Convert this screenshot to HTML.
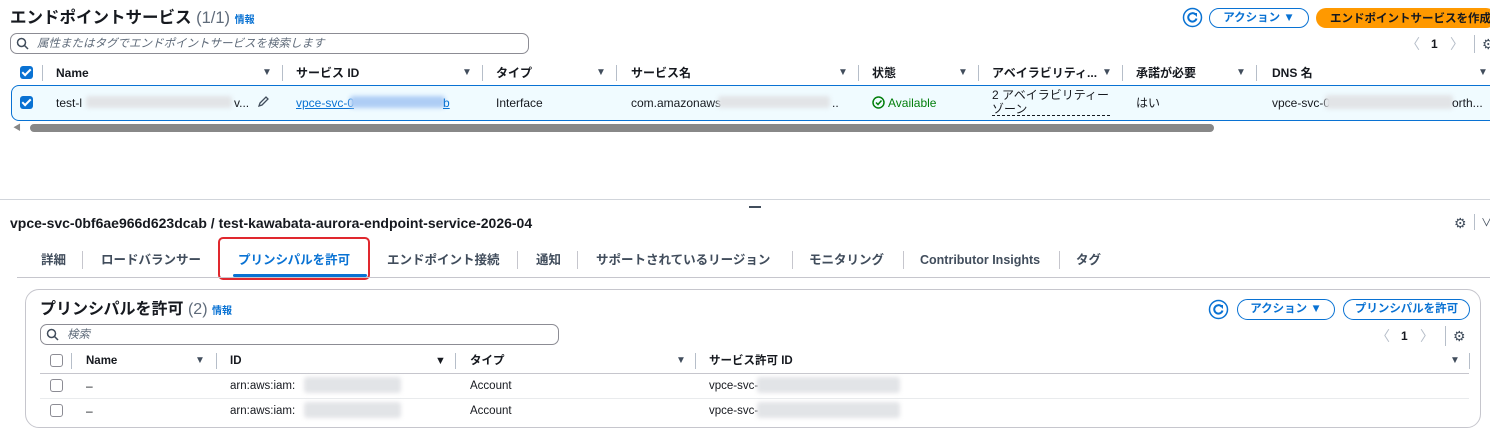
<!DOCTYPE html>
<html><head><meta charset="utf-8"><style>
*{margin:0;padding:0;box-sizing:border-box}
body{width:1490px;height:439px;background:#fff;font-family:"Liberation Sans","Noto Sans CJK JP",sans-serif;color:#16191f;position:relative;overflow:hidden;font-size:12px;line-height:18px}
.a{position:absolute;white-space:nowrap;line-height:18px}
.b{font-weight:bold}
.hd{font-weight:bold;font-size:12px;color:#16191f}
.tri{position:absolute;font-size:10px;color:#414d5c;line-height:18px}
.dv{position:absolute;width:1px;background:#b6bec9;height:16px}
.blur{position:absolute;background:#e2e4e7;filter:blur(2px);border-radius:3px}
.btn{position:absolute;border:1.5px solid #0972d3;border-radius:12px;color:#0972d3;font-weight:bold;font-size:11.5px;text-align:center;padding-top:1px}
.cb{position:absolute;width:13px;height:13px;border-radius:3px}
.cbon{background:#0972d3}
.cbon:after{content:"";position:absolute;left:4px;top:1px;width:3px;height:7px;border:solid #fff;border-width:0 2px 2px 0;transform:rotate(45deg)}
.cboff{border:1.5px solid #8c8c94;background:#fff}
.search{position:absolute;border:1.5px solid #8c8c94;border-radius:7px;color:#5f6b7a;font-style:italic;font-size:11.5px;padding-left:26px;padding-top:1px;line-height:18px}
.tab{position:absolute;top:251px;font-weight:bold;font-size:12.5px;color:#414d5c;line-height:18px;white-space:nowrap}
.tdv{position:absolute;top:251px;width:1px;height:18px;background:#c6c6cd}
</style></head><body>

<div class="a b" style="left:10px;top:9px;font-size:16.5px">エンドポイントサービス <span style="font-weight:normal;color:#5f6b7a">(1/1)</span> <span style="font-size:10px;color:#0972d3">情報</span></div>
<div class="search" style="left:10px;top:33px;width:519px;height:21px">属性またはタグでエンドポイントサービスを検索します</div>
<svg class="a" style="left:16px;top:37px" width="13" height="13"><circle cx="5.5" cy="5.5" r="4" fill="none" stroke="#414d5c" stroke-width="1.5"/><line x1="8.5" y1="8.5" x2="12" y2="12" stroke="#414d5c" stroke-width="1.5"/></svg>

<svg class="a" style="left:1182px;top:7px" width="21" height="21"><circle cx="10.5" cy="10.5" r="9" fill="none" stroke="#0972d3" stroke-width="1.5"/><path d="M13.5 7.5a4.2 4.2 0 1 0 1 4" fill="none" stroke="#0972d3" stroke-width="2"/><path d="M11 6h4v4z" fill="#0972d3"/></svg>
<div class="btn" style="left:1209px;top:8px;width:100px;height:20px;line-height:16px">アクション ▼</div>
<div class="a b" style="left:1316px;top:8px;width:180px;height:20px;line-height:20px;background:#ff9900;border-radius:10px;font-size:11.5px;padding-left:14px;padding-top:1px">エンドポイントサービスを作成</div>
<div class="a" style="left:1406px;top:35px;color:#b6bec9;font-size:14px">〈</div>
<div class="a b" style="left:1431px;top:35px">1</div>
<div class="a" style="left:1450px;top:35px;color:#b6bec9;font-size:14px">〉</div>
<div class="dv" style="left:1474px;top:35px;height:18px"></div>
<div class="a" style="left:1482px;top:35px;font-size:14px;color:#414d5c">⚙</div>

<div class="cb cbon" style="left:20px;top:66px"></div>
<div class="dv" style="left:42px;top:65px"></div>
<div class="a hd" style="left:56px;top:64px">Name</div><div class="tri" style="left:262px;top:64px">▼</div><div class="dv" style="left:282px;top:65px"></div>
<div class="a hd" style="left:296px;top:64px">サービス ID</div><div class="tri" style="left:462px;top:64px">▼</div><div class="dv" style="left:482px;top:65px"></div>
<div class="a hd" style="left:496px;top:64px">タイプ</div><div class="tri" style="left:596px;top:64px">▼</div><div class="dv" style="left:616px;top:65px"></div>
<div class="a hd" style="left:631px;top:64px">サービス名</div><div class="tri" style="left:838px;top:64px">▼</div><div class="dv" style="left:858px;top:65px"></div>
<div class="a hd" style="left:872px;top:64px">状態</div><div class="tri" style="left:958px;top:64px">▼</div><div class="dv" style="left:978px;top:65px"></div>
<div class="a hd" style="left:992px;top:64px">アベイラビリティ...</div><div class="tri" style="left:1102px;top:64px">▼</div><div class="dv" style="left:1122px;top:65px"></div>
<div class="a hd" style="left:1136px;top:64px">承諾が必要</div><div class="tri" style="left:1236px;top:64px">▼</div><div class="dv" style="left:1256px;top:65px"></div>
<div class="a hd" style="left:1272px;top:64px">DNS 名</div><div class="tri" style="left:1478px;top:64px">▼</div>

<div class="a" style="left:11px;top:85px;width:1490px;height:36px;border:1.5px solid #0972d3;border-radius:8px;background:#f0fbff"></div>
<div class="cb cbon" style="left:20px;top:96px"></div>
<div class="a" style="left:56px;top:94px">test-l</div><div class="blur" style="left:86px;top:96px;width:146px;height:12px"></div><div class="a" style="left:234px;top:94px">v...</div>
<svg class="a" style="left:257px;top:95px" width="12" height="13"><path d="M2 11l1-3 6-6 2 2-6 6z" fill="none" stroke="#414d5c" stroke-width="1.3"/></svg>
<div class="a" style="left:296px;top:94px;color:#0972d3;text-decoration:underline">vpce-svc-0</div><div class="blur" style="left:350px;top:96px;width:95px;height:12px;background:#aecdf5"></div><div class="a" style="left:443px;top:94px;color:#0972d3;text-decoration:underline">b</div>
<div class="a" style="left:496px;top:94px">Interface</div>
<div class="a" style="left:631px;top:94px">com.amazonaws</div><div class="blur" style="left:718px;top:96px;width:112px;height:12px"></div><div class="a" style="left:832px;top:94px">..</div>
<svg class="a" style="left:872px;top:96px" width="13" height="13"><circle cx="6.5" cy="6.5" r="5.5" fill="none" stroke="#037f0c" stroke-width="1.5"/><path d="M4 6.5l2 2 3.5-4" fill="none" stroke="#037f0c" stroke-width="1.5"/></svg>
<div class="a" style="left:888px;top:94px;color:#037f0c">Available</div>
<div class="a" style="left:992px;top:88px;line-height:14px">2 アベイラビリティー<br>ゾーン</div>
<div class="a" style="left:992px;top:115px;width:118px;border-top:1px dashed #16191f"></div>
<div class="a" style="left:1136px;top:94px">はい</div>
<div class="a" style="left:1272px;top:94px">vpce-svc-0</div><div class="blur" style="left:1325px;top:95px;width:128px;height:14px"></div><div class="a" style="left:1452px;top:94px">orth...</div>

<div class="a" style="left:13px;top:119px;font-size:8px;color:#888">◀</div>
<div class="a" style="left:30px;top:124px;width:1184px;height:8px;background:#888;border-radius:4px"></div>

<div class="a" style="left:0;top:199px;width:1490px;height:1px;background:#d1d5db"></div>
<div class="a" style="left:749px;top:206px;width:12px;height:2px;background:#414d5c"></div>

<div class="a b" style="left:10px;top:214px;font-size:14px">vpce-svc-0bf6ae966d623dcab / test-kawabata-aurora-endpoint-service-2026-04</div>
<div class="a" style="left:1454px;top:214px;font-size:14px;color:#414d5c">⚙</div>
<div class="dv" style="left:1474px;top:214px"></div>
<div class="a" style="left:1481px;top:214px;color:#414d5c;font-size:11px">∨</div>

<div class="tab" style="left:41px">詳細</div><div class="tdv" style="left:82px"></div>
<div class="tab" style="left:101px">ロードバランサー</div>
<div class="tab" style="left:238px;color:#0972d3">プリンシパルを許可</div>
<div class="a" style="left:233px;top:274px;width:134px;height:3px;background:#0972d3;border-radius:2px"></div>
<div class="a" style="left:218px;top:237px;width:152px;height:43px;border:2px solid #e0282e;border-radius:5px"></div>
<div class="tab" style="left:387px">エンドポイント接続</div><div class="tdv" style="left:517px"></div>
<div class="tab" style="left:536px">通知</div><div class="tdv" style="left:577px"></div>
<div class="tab" style="left:596px">サポートされているリージョン</div><div class="tdv" style="left:792px"></div>
<div class="tab" style="left:809px">モニタリング</div><div class="tdv" style="left:903px"></div>
<div class="tab" style="left:920px">Contributor Insights</div><div class="tdv" style="left:1059px"></div>
<div class="tab" style="left:1076px">タグ</div>
<div class="a" style="left:17px;top:277px;width:1473px;height:1px;background:#c6c6cd"></div>

<div class="a" style="left:25px;top:289px;width:1456px;height:139px;border:1px solid #c6c6cd;border-radius:14px"></div>
<div class="a b" style="left:40px;top:301px;font-size:16px">プリンシパルを許可 <span style="font-weight:normal;color:#5f6b7a">(2)</span> <span style="font-size:10px;color:#0972d3">情報</span></div>
<div class="search" style="left:40px;top:324px;width:519px;height:21px">検索</div>
<svg class="a" style="left:46px;top:328px" width="13" height="13"><circle cx="5.5" cy="5.5" r="4" fill="none" stroke="#414d5c" stroke-width="1.5"/><line x1="8.5" y1="8.5" x2="12" y2="12" stroke="#414d5c" stroke-width="1.5"/></svg>

<svg class="a" style="left:1208px;top:299px" width="21" height="21"><circle cx="10.5" cy="10.5" r="9" fill="none" stroke="#0972d3" stroke-width="1.5"/><path d="M13.5 7.5a4.2 4.2 0 1 0 1 4" fill="none" stroke="#0972d3" stroke-width="2"/><path d="M11 6h4v4z" fill="#0972d3"/></svg>
<div class="btn" style="left:1237px;top:299px;width:98px;height:21px;line-height:17px">アクション ▼</div>
<div class="btn" style="left:1343px;top:299px;width:127px;height:21px;line-height:17px">プリンシパルを許可</div>
<div class="a" style="left:1376px;top:327px;color:#b6bec9;font-size:14px">〈</div>
<div class="a b" style="left:1401px;top:327px">1</div>
<div class="a" style="left:1420px;top:327px;color:#b6bec9;font-size:14px">〉</div>
<div class="dv" style="left:1445px;top:326px;height:20px"></div>
<div class="a" style="left:1453px;top:327px;font-size:14px;color:#414d5c">⚙</div>

<div class="cb cboff" style="left:50px;top:354px"></div>
<div class="dv" style="left:71px;top:353px"></div>
<div class="a hd" style="left:86px;top:352px;font-size:11.5px">Name</div><div class="tri" style="left:195px;top:352px">▼</div><div class="dv" style="left:216px;top:353px"></div>
<div class="a hd" style="left:230px;top:352px;font-size:11.5px">ID</div><div class="a" style="left:435px;top:352px;font-size:11px;color:#16191f">▼</div><div class="dv" style="left:455px;top:353px"></div>
<div class="a hd" style="left:470px;top:352px;font-size:11.5px">タイプ</div><div class="tri" style="left:676px;top:352px">▼</div><div class="dv" style="left:695px;top:353px"></div>
<div class="a hd" style="left:709px;top:352px;font-size:11.5px">サービス許可 ID</div><div class="tri" style="left:1450px;top:352px">▼</div><div class="dv" style="left:1469px;top:353px"></div>
<div class="a" style="left:40px;top:373px;width:1429px;height:1px;background:#c6c6cd"></div>

<div class="cb cboff" style="left:50px;top:379px"></div>
<div class="a" style="left:86px;top:377px">–</div>
<div class="a" style="left:230px;top:377px;font-size:11.5px">arn:aws:iam:</div><div class="blur" style="left:304px;top:377px;width:97px;height:16px"></div>
<div class="a" style="left:470px;top:377px;font-size:11.5px">Account</div>
<div class="a" style="left:709px;top:377px;font-size:11.5px">vpce-svc-</div><div class="blur" style="left:757px;top:377px;width:143px;height:16px"></div>
<div class="a" style="left:40px;top:398px;width:1429px;height:1px;background:#e9ebed"></div>
<div class="cb cboff" style="left:50px;top:404px"></div>
<div class="a" style="left:86px;top:402px">–</div>
<div class="a" style="left:230px;top:402px;font-size:11.5px">arn:aws:iam:</div><div class="blur" style="left:304px;top:402px;width:97px;height:16px"></div>
<div class="a" style="left:470px;top:402px;font-size:11.5px">Account</div>
<div class="a" style="left:709px;top:402px;font-size:11.5px">vpce-svc-</div><div class="blur" style="left:757px;top:402px;width:143px;height:16px"></div>
</body></html>
